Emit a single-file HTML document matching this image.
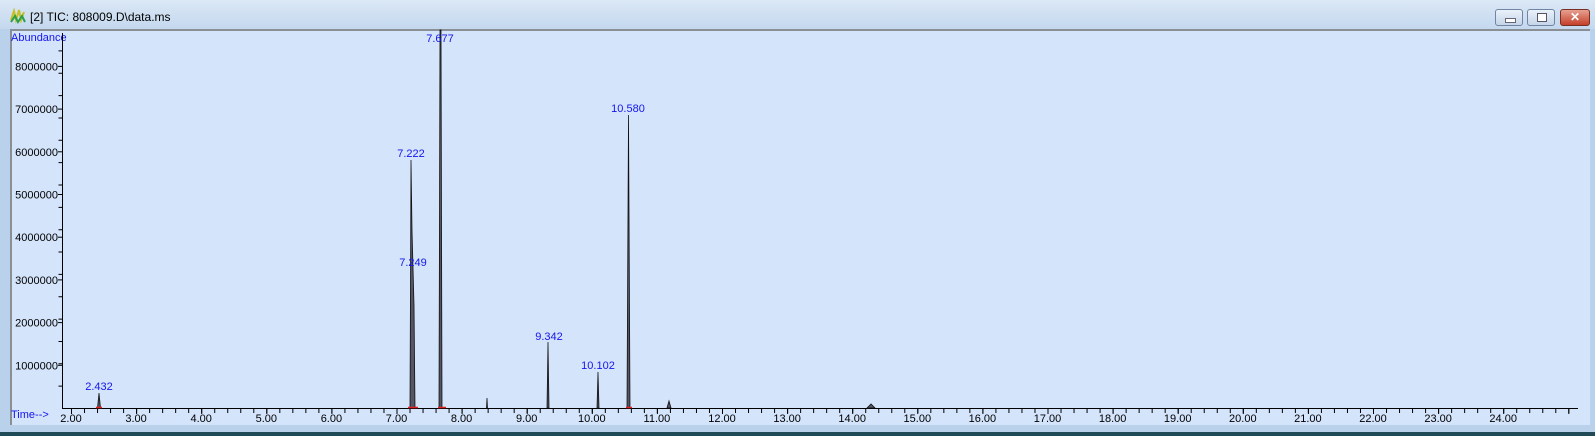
<!DOCTYPE html>
<html><head><style>
body{margin:0;width:1595px;height:436px;overflow:hidden;background:#b9d1ea;font-family:"Liberation Sans",sans-serif;}
.title{position:absolute;left:0;top:0;width:1595px;height:29px;background:linear-gradient(#dbe8f6,#c4d8ee);}
.panel{position:absolute;left:10px;top:29px;width:1580px;height:396px;background:#d4e4fb;border-top:2px solid #8a8f96;border-left:2px solid #8a8f96;box-sizing:border-box;}
.bottom{position:absolute;left:0;top:432px;width:1595px;height:4px;background:#1f4a56;}
.btn{position:absolute;top:9px;height:17px;border:1px solid #6f85a3;border-radius:3px;background:linear-gradient(#eaf1fa,#c5d5e8);box-sizing:border-box;}
</style></head><body>
<div class="title"></div>
<svg style="position:absolute;left:10px;top:8px" width="16" height="16"><path d="M1 12 L4 3 L6 12 L9 2 L11 12 L14 4" stroke="#c8c020" stroke-width="2" fill="none"/><path d="M1 14 L5 8 L8 14 L12 8 L15 14" stroke="#2aa04a" stroke-width="2" fill="none"/></svg>
<div style="position:absolute;left:30px;top:10px;font-size:12px;color:#000">[2] TIC: 808009.D\data.ms</div>
<div class="btn" style="left:1495px;width:28px"><div style="position:absolute;left:9px;top:8px;width:9px;height:3px;background:#fff;border:1px solid #667"></div></div>
<div class="btn" style="left:1527px;width:28px"><div style="position:absolute;left:9px;top:3px;width:8px;height:7px;border:1px solid #556;background:#fff"></div></div>
<div class="btn" style="left:1560px;width:30px;background:linear-gradient(#e8a090,#c4402a);border-color:#7a3020;color:#fff;font-size:12px;font-weight:bold;text-align:center;line-height:15px">✕</div>
<div class="panel"></div>
<div class="bottom"></div>
<svg style="position:absolute;left:0;top:0" width="1595" height="436" font-family="Liberation Sans, sans-serif" font-size="11">
<text x="11" y="41" fill="#1515ee">Abundance</text>
<text x="11" y="418" fill="#1515ee">Time--&gt;</text>
<g stroke="#000" stroke-width="1">
<line x1="62.5" y1="33" x2="62.5" y2="408"/>
<line x1="62" y1="408.5" x2="1578" y2="408.5"/>
<line x1="71" y1="410.5" x2="1578" y2="410.5" stroke-width="5" stroke-dasharray="1 12.02"/>
<line x1="71" y1="411" x2="1578" y2="411" stroke-width="6" stroke-dasharray="1 64.1"/>
<line x1="60.5" y1="408" x2="60.5" y2="40" stroke-width="4" stroke-dasharray="0 21.35 1 0"/>
</g>
<g stroke="#000">
<line x1="58" y1="365.3" x2="62" y2="365.3"/><line x1="58" y1="322.6" x2="62" y2="322.6"/><line x1="58" y1="279.9" x2="62" y2="279.9"/><line x1="58" y1="237.2" x2="62" y2="237.2"/><line x1="58" y1="194.5" x2="62" y2="194.5"/><line x1="58" y1="151.8" x2="62" y2="151.8"/><line x1="58" y1="109.1" x2="62" y2="109.1"/><line x1="58" y1="66.4" x2="62" y2="66.4"/>
</g>
<g text-anchor="end">
<text x="58" y="369.3">1000000</text><text x="58" y="326.6">2000000</text><text x="58" y="283.9">3000000</text><text x="58" y="241.2">4000000</text><text x="58" y="198.5">5000000</text><text x="58" y="155.8">6000000</text><text x="58" y="113.1">7000000</text><text x="58" y="70.4">8000000</text>
</g>
<g text-anchor="middle">
<text x="71" y="422">2.00</text><text x="136.1" y="422">3.00</text><text x="201.2" y="422">4.00</text><text x="266.3" y="422">5.00</text><text x="331.4" y="422">6.00</text><text x="396.5" y="422">7.00</text><text x="461.6" y="422">8.00</text><text x="526.7" y="422">9.00</text><text x="591.8" y="422">10.00</text><text x="656.9" y="422">11.00</text><text x="722" y="422">12.00</text><text x="787.1" y="422">13.00</text><text x="852.2" y="422">14.00</text><text x="917.3" y="422">15.00</text><text x="982.4" y="422">16.00</text><text x="1047.5" y="422">17.00</text><text x="1112.6" y="422">18.00</text><text x="1177.7" y="422">19.00</text><text x="1242.8" y="422">20.00</text><text x="1307.9" y="422">21.00</text><text x="1373" y="422">22.00</text><text x="1438.1" y="422">23.00</text><text x="1503.2" y="422">24.00</text>
</g>
<g fill="#556" stroke="#111" stroke-width="0.8">
<path d="M97.5 408 L99 393 L100.5 408Z"/>
<path d="M410 408 L411 160 L412 230 L413 268 L414 305 L415 408Z"/>
<path d="M439 408 L440 30 L441 30 L442 408Z"/>
<path d="M486.5 408 L487 398 L487.5 408Z"/>
<path d="M547 408 L548 342 L549 408Z"/>
<path d="M597 408 L598 372 L599 408Z"/>
<path d="M627 408 L628.5 115 L630 408Z"/>
<path d="M667 408 L669 401 L671 408Z"/>
<path d="M867 408 L871 404 L875 408Z"/>
</g>
<g stroke="#e02020" stroke-width="1.5"><line x1="96" y1="407.5" x2="102" y2="407.5"/><line x1="408" y1="407.5" x2="418" y2="407.5"/><line x1="438" y1="407.5" x2="446" y2="407.5"/><line x1="626" y1="407.5" x2="632" y2="407.5"/></g>
<g fill="#1515ee" text-anchor="middle">
<text x="99" y="390">2.432</text>
<text x="411" y="157">7.222</text>
<text x="413" y="266">7.249</text>
<text x="440" y="42">7.677</text>
<text x="549" y="340">9.342</text>
<text x="598" y="369">10.102</text>
<text x="628" y="112">10.580</text>
</g>
</svg>
</body></html>
